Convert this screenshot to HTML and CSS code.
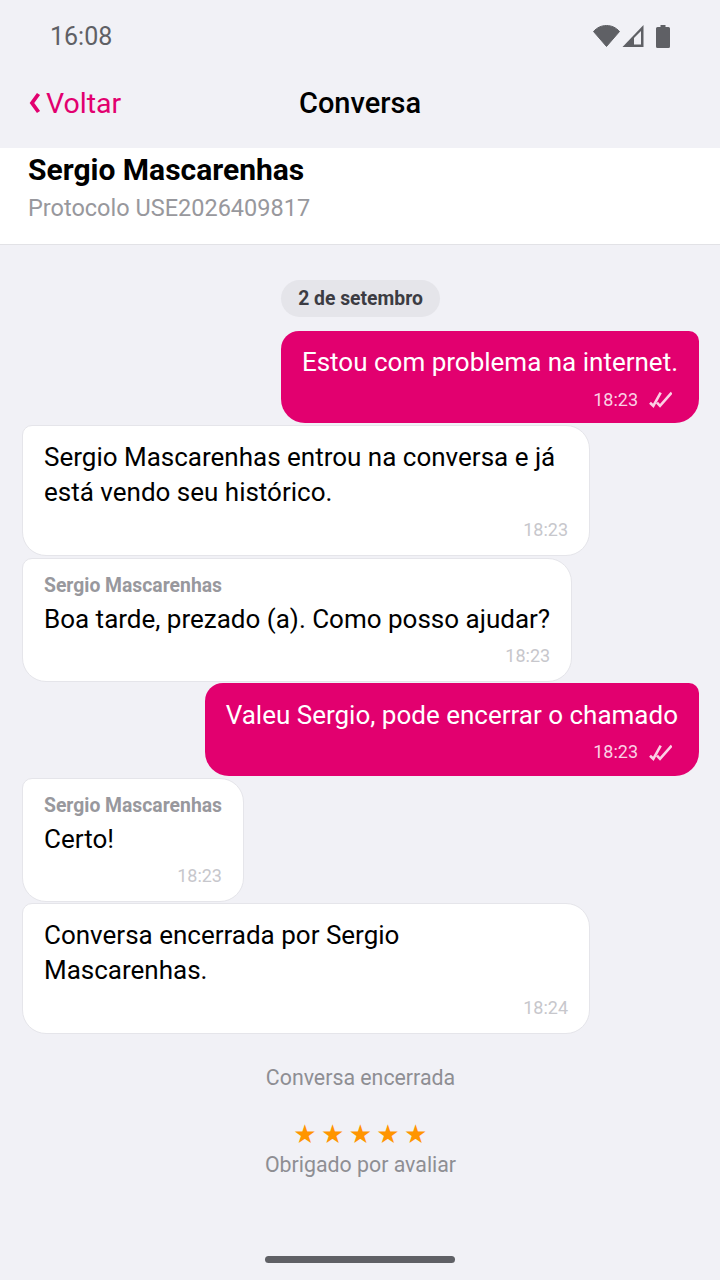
FILE: index.html
```html
<!DOCTYPE html>
<html lang="pt-BR">
<head>
    <meta charset="UTF-8">
    <meta name="viewport" content="width=device-width, initial-scale=1.0">
    <title>Conversa</title>
    <link rel="stylesheet" href="styles.css">
</head>
<body>

    <div class="status-bar">
        <span class="status-time">16:08</span>
        <div class="status-icons">
            <svg class="icon-wifi" width="27" height="22" viewBox="0 0 27 22"><path d="M.5 6.500C4 2.500 8.500 .5 13.500 .5S23 2.500 26.500 6.500L13.500 21.500Z" fill="#5f6065" stroke="#5f6065" stroke-linejoin="round"/></svg>
            <svg class="icon-signal" width="22" height="22" viewBox="0 0 22 22"><path d="M.5 22 21.500 0V22Z" fill="#5f6065"/><path d="M12 13 19 6V19.500H12Z" fill="#f1f1f6"/></svg>
            <svg class="icon-battery" width="14" height="23" viewBox="0 0 14 23"><path d="M4.500 0H9.500V2H12.500Q14 2 14 3.500V21.500Q14 23 12.500 23H1.500Q0 23 0 21.500V3.500Q0 2 1.500 2H4.500Z" fill="#5f6065"/></svg>
        </div>
    </div>

    <div class="nav-bar">
        <div class="nav-back">
            <svg width="12" height="22" viewBox="0 0 12 22"><path d="M9.500 2 3 11 9.500 20" fill="none" stroke="#e2006f" stroke-width="3.800"/></svg>
            <span>Voltar</span>
        </div>
        <h1 class="nav-title">Conversa</h1>
    </div>

    <div class="contact">
        <div class="contact-name">Sergio Mascarenhas</div>
        <div class="contact-protocol">Protocolo USE2026409817</div>
    </div>

    <div class="chat">
        <div class="date-pill">2 de setembro</div>

        <div class="bubble out">
            <p>Estou com problema na internet.</p>
            <div class="meta">
                <span class="time">18:23</span>
                <svg width="24" height="18" viewBox="0 0 24 18"><path d="M2 12.700 5.300 15.800 12.700 2.700M9 12.700 12 15.800 23.700 2.700" fill="none" stroke="#fbd0e5" stroke-width="2.600"/></svg>
            </div>
        </div>

        <div class="bubble in wide">
            <p>Sergio Mascarenhas entrou na conversa e já está vendo seu histórico.</p>
            <div class="meta"><span class="time">18:23</span></div>
        </div>

        <div class="bubble in named">
            <div class="sender">Sergio Mascarenhas</div>
            <p>Boa tarde, prezado (a). Como posso ajudar?</p>
            <div class="meta"><span class="time">18:23</span></div>
        </div>

        <div class="bubble out">
            <p>Valeu Sergio, pode encerrar o chamado</p>
            <div class="meta">
                <span class="time">18:23</span>
                <svg width="24" height="18" viewBox="0 0 24 18"><path d="M2 12.700 5.300 15.800 12.700 2.700M9 12.700 12 15.800 23.700 2.700" fill="none" stroke="#fbd0e5" stroke-width="2.600"/></svg>
            </div>
        </div>

        <div class="bubble in named">
            <div class="sender">Sergio Mascarenhas</div>
            <p>Certo!</p>
            <div class="meta"><span class="time">18:23</span></div>
        </div>

        <div class="bubble in wide">
            <p>Conversa encerrada por Sergio Mascarenhas.</p>
            <div class="meta"><span class="time">18:24</span></div>
        </div>

        <div class="closed-note">Conversa encerrada</div>
        <div class="stars">★★★★★</div>
        <div class="thanks">Obrigado por avaliar</div>
    </div>

    <div class="home-indicator"></div>

</body>
</html>
```

FILE: styles.css
```css
html, body {
    height: 100%;
}

body {
    margin: 0;
    height: 1280px;
    overflow: hidden;
    display: flex;
    flex-direction: column;
    background-color: #f1f1f6;
    color: #000;
    font-family: Roboto, "Liberation Sans", sans-serif;
}

.status-bar {
    height: 72px;
    padding: 0 50px;
    box-sizing: border-box;
    display: flex;
    align-items: center;
    justify-content: space-between;
}

.status-time {
    font-size: 25px;
    color: #5f6065;
}

.status-icons {
    display: flex;
    align-items: center;
    gap: 2px;
}

.status-icons svg {
    display: block;
}

.icon-battery {
    margin-left: 10px;
}

.nav-bar {
    height: 62px;
    margin-bottom: 14px;
    padding-left: 29px;
    display: flex;
    align-items: center;
    position: relative;
}

.nav-back {
    display: flex;
    align-items: center;
    gap: 5px;
    font-size: 28.500px;
    color: #e2006f;
}

.nav-title {
    position: absolute;
    left: 0;
    right: 0;
    margin: 0;
    text-align: center;
    font-size: 29px;
    font-weight: 500;
    pointer-events: none;
}

.contact {
    height: 97px;
    box-sizing: border-box;
    padding: 4px 28px 0;
    background-color: #fff;
    border-bottom: 1px solid #e2e2e6;
}

.contact-name {
    font-size: 30px;
    font-weight: 700;
    line-height: 36px;
}

.contact-protocol {
    font-size: 23.500px;
    line-height: 28px;
    margin-top: 6px;
    color: #98989d;
}

.chat {
    padding: 35px 21px 0 22px;
    display: flex;
    flex-direction: column;
    gap: 1.700px;
}

.date-pill {
    align-self: center;
    height: 37px;
    line-height: 37px;
    padding: 0 17px;
    margin-bottom: 12.300px;
    border-radius: 19px;
    background-color: #e5e5ea;
    color: #3c3c43;
    font-size: 19.330px;
    font-weight: 700;
}

.bubble {
    box-sizing: border-box;
    max-width: 568px;
    padding: 14px 21px 0;
    border-radius: 24px;
}

.bubble p {
    margin: 0;
    font-size: 26px;
    line-height: 35px;
}

.bubble.in {
    align-self: flex-start;
    background-color: #fff;
    border: 1px solid #e5e5ea;
    border-top-left-radius: 10px;
}

.bubble.wide {
    width: 568px;
}

.bubble.out {
    align-self: flex-end;
    max-width: none;
    height: 92.400px;
    padding-top: 14.400px;
    background-color: #e2006f;
    color: #fff;
    border-top-right-radius: 10px;
    border-top-left-radius: 18px;
}

.sender {
    font-size: 19.330px;
    font-weight: 700;
    line-height: 26px;
    margin-bottom: 3px;
    color: #98989d;
}

.meta {
    display: flex;
    justify-content: flex-end;
    align-items: center;
    gap: 10px;
    height: 26px;
    margin-top: 6px;
    padding-bottom: 13px;
}

.bubble.named .meta {
    padding-bottom: 12px;
}

.bubble.out .meta {
    padding-right: 6px;
    padding-bottom: 0;
}

.time {
    font-size: 18px;
    color: #c7c7cc;
}

.bubble.out .time {
    color: #fbd0e5;
}

.closed-note {
    margin-top: 28px;
    text-align: center;
    font-size: 21.330px;
    line-height: 28px;
    color: #8e8e93;
}

.stars {
    margin-top: 25px;
    padding-left: 4px;
    text-align: center;
    font-family: "DejaVu Sans", sans-serif;
    font-size: 26px;
    line-height: 30px;
    letter-spacing: 4.400px;
    color: #ff9500;
}

.thanks {
    margin-top: 1px;
    text-align: center;
    font-size: 21.330px;
    line-height: 28px;
    color: #8e8e93;
}

.home-indicator {
    position: absolute;
    left: 265px;
    top: 1256px;
    width: 190px;
    height: 7px;
    border-radius: 4px;
    background-color: #5f6065;
}
```
